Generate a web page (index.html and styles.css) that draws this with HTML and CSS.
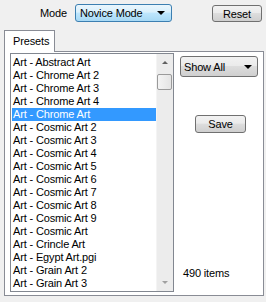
FILE: index.html
```html
<!DOCTYPE html>
<html>
<head>
<meta charset="utf-8">
<link rel="stylesheet" href="styles.css">
</head>
<body>
<div class="app">
  <div class="toolbar">
    <span class="mode-label">Mode</span>
    <div class="combo combo-blue">
      <span class="combo-text">Novice Mode</span>
      <span class="arrow"></span>
    </div>
    <div class="btn btn-reset">Reset</div>
  </div>
  <div class="tabs">
    <div class="tab">Presets</div>
  </div>
  <div class="panel">
    <div class="listbox">
      <div class="items">
        <div class="item">Art - Abstract Art</div>
        <div class="item">Art - Chrome Art 2</div>
        <div class="item">Art - Chrome Art 3</div>
        <div class="item">Art - Chrome Art 4</div>
        <div class="item selected">Art - Chrome Art</div>
        <div class="item">Art - Cosmic Art 2</div>
        <div class="item">Art - Cosmic Art 3</div>
        <div class="item">Art - Cosmic Art 4</div>
        <div class="item">Art - Cosmic Art 5</div>
        <div class="item">Art - Cosmic Art 6</div>
        <div class="item">Art - Cosmic Art 7</div>
        <div class="item">Art - Cosmic Art 8</div>
        <div class="item">Art - Cosmic Art 9</div>
        <div class="item">Art - Cosmic Art</div>
        <div class="item">Art - Crincle Art</div>
        <div class="item">Art - Egypt Art.pgi</div>
        <div class="item">Art - Grain Art 2</div>
        <div class="item">Art - Grain Art 3</div>
      </div>
      <div class="scrollbar">
        <div class="sb-btn"><span class="sb-up"></span></div>
        <div class="sb-thumb"></div>
        <div class="sb-track"></div>
        <div class="sb-btn"><span class="sb-down"></span></div>
      </div>
    </div>
    <div class="side">
      <div class="combo combo-gray">
        <span class="combo-text">Show All</span>
        <span class="arrow"></span>
      </div>
      <div class="btn btn-save">Save</div>
      <div class="count">490 items</div>
    </div>
  </div>
</div>
</body>
</html>
```
FILE: styles.css
```css
* { box-sizing: border-box; }
html, body {
  margin: 0;
  padding: 0;
  background: #f0f0f0;
}
body {
  font-family: "Liberation Sans", Arial, sans-serif;
  font-size: 11px;
  letter-spacing: -0.15px;
  color: #000;
  width: 266px;
  height: 302px;
  overflow: hidden;
}
.app { padding-top: 4px; }
.toolbar {
  display: flex;
  align-items: flex-start;
  height: 18px;
}
.mode-label {
  width: 67px;
  text-align: right;
  line-height: 18px;
  margin-right: 8px;
}
.combo {
  display: flex;
  align-items: center;
  justify-content: space-between;
  border-radius: 3px;
  padding: 0 6px 0 4px;
}
.combo-blue {
  width: 97px;
  height: 18px;
  border: 1px solid #3c7fb1;
  background: linear-gradient(#eaf6fd 0%, #d9f0fc 45%, #bee6fd 50%, #a7d9f5 100%);
}
.combo-gray {
  width: 78px;
  height: 21px;
  border: 1px solid #707070;
  background: linear-gradient(#f2f2f2 0%, #ebebeb 45%, #dddddd 50%, #cfcfcf 100%);
  padding: 0 5px 0 3px;
}
.arrow {
  width: 0;
  height: 0;
  border-left: 4px solid transparent;
  border-right: 4px solid transparent;
  border-top: 4px solid #000;
}
.btn {
  display: flex;
  align-items: center;
  justify-content: center;
  border: 1px solid #707070;
  border-radius: 3px;
  background: linear-gradient(#f2f2f2 0%, #ebebeb 45%, #dddddd 50%, #cfcfcf 100%);
}
.btn-reset {
  width: 50px;
  height: 17px;
  margin-left: 40px;
  margin-top: 1px;
}
.tabs {
  display: flex;
  margin-top: 8px;
  padding-left: 4px;
  height: 21px;
}
.tab {
  width: 51px;
  height: 22px;
  border: 1px solid #898c95;
  border-bottom: none;
  background: #fff;
  padding: 4px 0 0 8px;
  position: relative;
  z-index: 1;
}
.panel {
  margin-left: 4px;
  width: 260px;
  height: 245px;
  border: 1px solid #898c95;
  background: #fff;
  padding: 1px 5px 0 5px;
  display: flex;
}
.listbox {
  width: 165px;
  height: 239px;
  border: 1px solid #828790;
  display: flex;
  background: #fff;
}
.items {
  flex: 1;
  padding: 2px 0 0 1px;
}
.item {
  height: 13px;
  line-height: 13px;
  padding-left: 1px;
  white-space: nowrap;
}
.item.selected {
  background: #3399ff;
  color: #fff;
}
.scrollbar {
  width: 17px;
  background: #ececec;
  border-left: 1px solid #f4f4f4;
  display: flex;
  flex-direction: column;
}
.sb-btn {
  height: 17px;
  display: flex;
  align-items: center;
  justify-content: center;
}
.sb-up, .sb-down {
  width: 0;
  height: 0;
  border-left: 3px solid transparent;
  border-right: 3px solid transparent;
}
.sb-up { border-bottom: 3px solid #606060; }
.sb-down { border-top: 3px solid #a0a0a0; }
.sb-thumb {
  height: 16px;
  margin: 3px 1px 0 0;
  border: 1px solid #9a9a9a;
  border-radius: 2px;
  background: linear-gradient(90deg, #f4f4f4, #e4e4e4);
}
.sb-track { flex: 1; }
.side {
  display: flex;
  flex-direction: column;
  margin-left: 6px;
  flex: 1;
}
.side .combo-gray { margin-top: 3px; }
.btn-save {
  width: 51px;
  height: 18px;
  margin-top: 38px;
  margin-left: 15px;
}
.count {
  margin-top: auto;
  margin-bottom: 15px;
  padding-left: 3px;
  line-height: 13px;
}
```
